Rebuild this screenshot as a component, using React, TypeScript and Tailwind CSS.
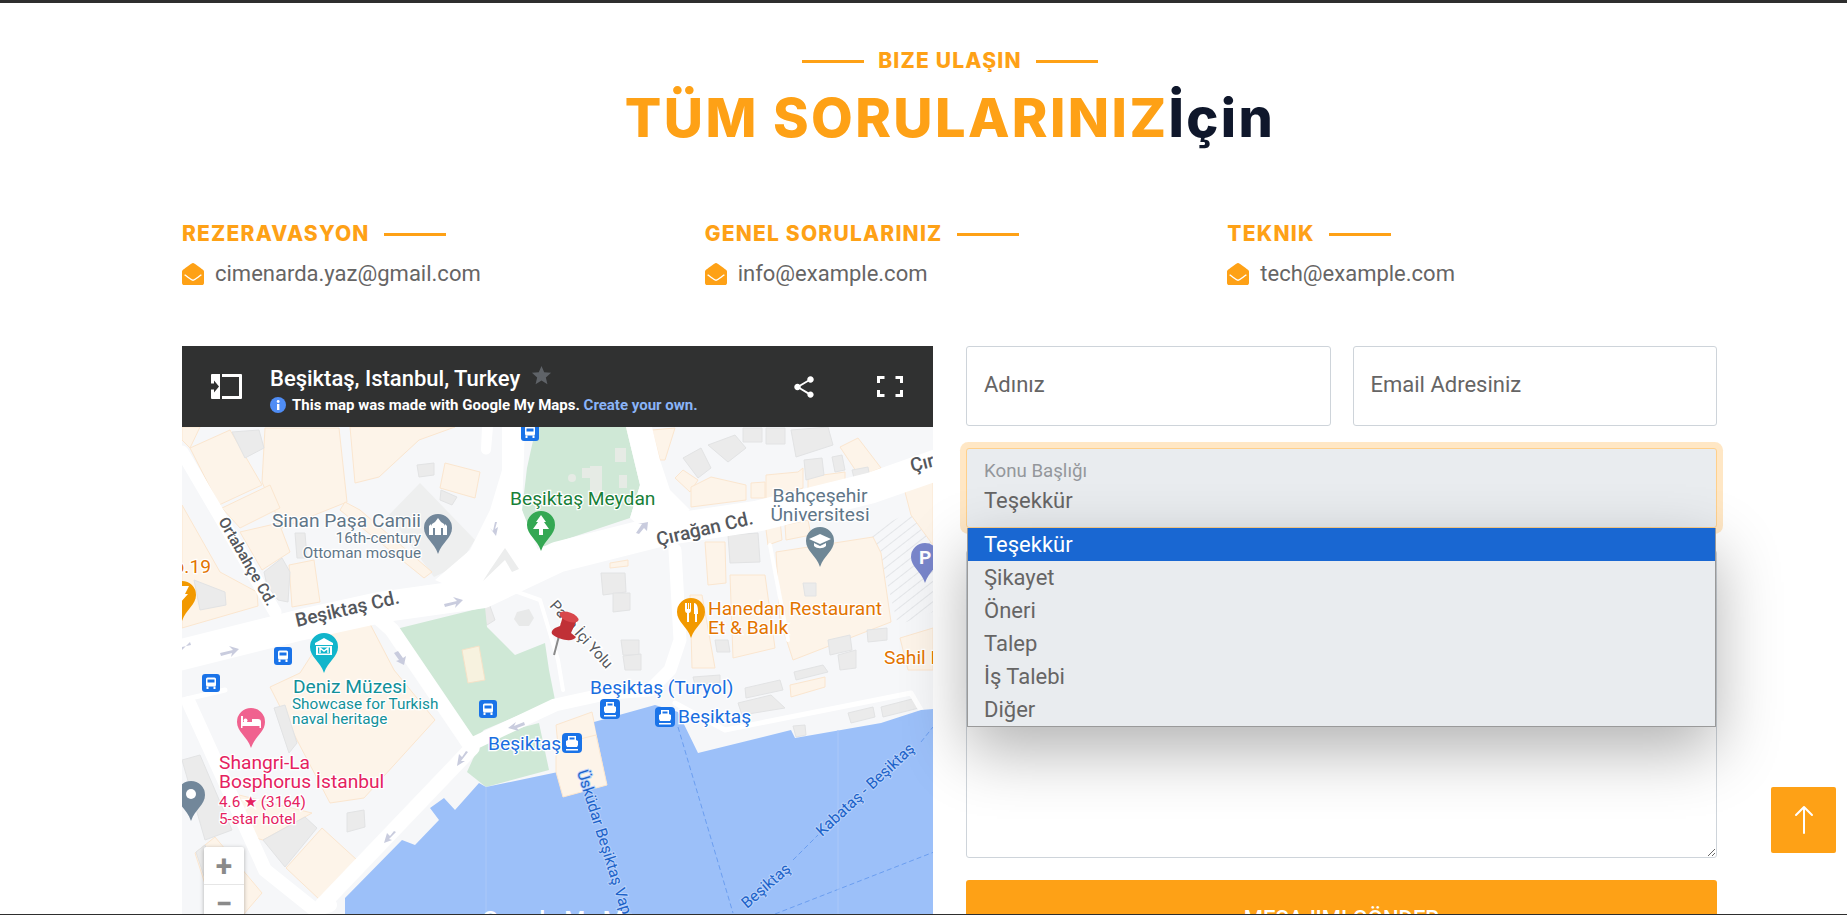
import { FaEnvelopeOpen } from 'react-icons/fa';
import { BsArrowUp } from 'react-icons/bs';
import { MdShare, MdStar } from 'react-icons/md';

const contacts = [
  { title: 'REZERAVASYON', email: 'cimenarda.yaz@gmail.com' },
  { title: 'GENEL SORULARINIZ', email: 'info@example.com' },
  { title: 'TEKNIK', email: 'tech@example.com' },
];

const options = ['Teşekkür', 'Şikayet', 'Öneri', 'Talep', 'İş Talebi', 'Diğer'];

// map shapes use page coordinates, the svg viewBox starts at the map's corner
const peach = [
  '265,428 339,428 347,502 282,528 262,482',
  '350,427 455,427 419,440 379,477 355,483',
  '445,463 480,472 475,498 440,488',
  '190,448 230,430 262,485 219,505',
  '222,508 270,485 280,508 240,528',
  '240,532 279,523 290,552 262,570',
  '289,565 314,560 320,602 292,607',
  '182,505 220,572 257,592 258,606 182,628',
  '345,502 360,510 432,572 424,578 340,510',
  '329,628 369,622 394,670 435,720 364,798 330,803 297,740 270,687 300,673',
  '322,828 357,860 320,900 286,868',
  '239,795 312,813 263,840 252,837',
  '195,853 215,837 262,893 243,915 215,915',
  '182,427 200,427 190,448 182,440',
  '675,478 683,470 698,480 690,492',
  '691,487 711,477 746,485 746,500 691,507',
  '751,483 765,482 765,498 751,498',
  '766,475 798,472 803,468 803,488 766,500',
  '808,477 845,472 845,488 808,492',
  '840,447 858,438 881,468 860,477',
  '776,552 873,537 881,553 891,622 793,660 780,620',
  '705,542 725,542 726,583 708,585',
  '730,575 765,575 775,648 733,658',
  '690,595 702,595 715,668 692,668',
  '765,522 780,520 782,540 768,545',
  '785,525 808,520 811,535 786,540',
  '610,428 640,428 642,430 612,433',
  '610,563 628,560 628,566 610,568',
  '905,492 933,478 933,545 911,515',
  '900,638 933,628 933,670 908,670',
  '790,685 825,677 825,687 791,697',
  '652,430 675,428 665,460 660,460',
  '556,725 592,712 607,785 563,797',
];

const grey = [
  '232,432 259,430 264,448 245,458',
  '417,465 434,463 434,475 419,477',
  '441,490 457,497 452,505 440,500',
  '295,533 305,533 307,558 297,558',
  '264,572 282,558 290,572 288,602 278,600 267,585',
  '194,580 225,592 226,605 200,610',
  '708,445 735,435 746,448 728,462',
  '683,458 701,448 711,468 698,478',
  '743,428 762,428 762,442 743,442',
  '766,428 785,428 785,444 766,444',
  '791,430 828,427 833,445 796,457',
  '804,460 822,458 824,475 806,480',
  '832,457 842,455 845,470 835,472',
  '852,470 868,467 870,478 855,482',
  '728,535 758,533 760,562 730,563',
  '601,573 625,573 626,592 603,595',
  '613,593 630,593 630,610 613,612',
  '621,640 639,640 639,655 623,655',
  '623,656 641,654 641,670 625,670',
  '715,640 728,640 730,652 717,652',
  '803,583 816,583 816,596 805,596',
  '828,640 850,635 852,650 830,655',
  '838,655 856,650 856,668 840,670',
  '867,630 887,628 887,640 868,642',
  '745,688 780,680 783,690 746,698',
  '738,703 771,695 785,708 742,715',
  '693,677 720,675 720,683 695,685',
  '848,713 873,707 875,717 851,723',
  '881,707 916,698 919,708 883,717',
  '793,726 805,725 806,735 796,737',
  '794,672 823,665 828,672 796,680',
  '274,708 285,705 297,743 289,753',
  '347,813 364,810 365,827 347,832',
  '305,817 317,828 285,867 263,840',
  '182,760 200,755 232,830 205,840',
  '196,852 205,845 222,895 212,900',
  '486,595 495,620 487,625 478,605',
];

const busIcons: [number, number][] = [[530, 432], [283, 656], [211, 683], [488, 709]];
const ferryIcons: [number, number][] = [[610, 709], [665, 717], [572, 743]];

function Pin({ x, y, color, children }: { x: number; y: number; color: string; children?: React.ReactNode }) {
  return (
    <g transform={`translate(${x} ${y})`}>
      <path
        d="M0 -14a14 14 0 0 1 14 14c0 10 -10 14 -14 26c-4 -12 -14 -16 -14 -26a14 14 0 0 1 14 -14z"
        fill={color}
      />
      {children}
    </g>
  );
}

function BusIcon({ x, y }: { x: number; y: number }) {
  return (
    <g transform={`translate(${x} ${y})`}>
      <rect x="-9" y="-9" width="18" height="18" rx="3" fill="#1a73e8" />
      <rect x="-5" y="-5.5" width="10" height="9" rx="1.5" fill="#fff" />
      <rect x="-3.5" y="-3.5" width="7" height="3" fill="#1a73e8" />
      <rect x="-4.5" y="3.5" width="2" height="2.5" fill="#fff" />
      <rect x="2.5" y="3.5" width="2" height="2.5" fill="#fff" />
    </g>
  );
}

function FerryIcon({ x, y }: { x: number; y: number }) {
  return (
    <g transform={`translate(${x} ${y})`}>
      <rect x="-10" y="-10" width="20" height="20" rx="4" fill="#1a73e8" />
      <path d="M-4 -7h8v4l2 1v4l-1 2h-10l-1 -2v-4l2 -1z" fill="#fff" />
      <rect x="-2.5" y="-5.5" width="5" height="2" fill="#1a73e8" />
      <rect x="-6" y="6" width="12" height="1.5" fill="#fff" />
    </g>
  );
}

function MapCanvas() {
  return (
    <svg viewBox="182 427 751 487" className="block h-[487px] w-[751px] bg-[#f6f7f9]">
      <defs>
        <pattern id="hatch" width="8" height="8" patternUnits="userSpaceOnUse" patternTransform="rotate(-38)">
          <rect width="8" height="8" fill="#f6f7f9" />
          <rect width="8" height="1" fill="#e3e5e8" />
        </pattern>
      </defs>

      {/* plaza and parking */}
      <polygon points="420,483 475,540 459,565 434,577 389,515" fill="#eeefef" />
      <polygon points="868,532 911,512 933,528 933,612 898,625 878,548" fill="url(#hatch)" />

      {/* blocks */}
      {peach.map((p) => (
        <polygon key={p} points={p} fill="#fdf4e9" stroke="#fbe6cf" strokeWidth="1" />
      ))}
      {grey.map((p) => (
        <polygon key={p} points={p} fill="#ebebeb" stroke="#e2e3e4" strokeWidth="1" />
      ))}

      {/* parks */}
      <polygon points="536,427 626,427 634,460 640,485 630,518 558,542 548,550 527,530 522,510 527,468" fill="#cfe8d6" />
      <polygon points="392,630 485,607 487,627 515,655 545,643 549,670 555,700 484,730 469,745" fill="#cfe8d6" />
      <polygon points="485,737 539,723 549,770 486,787 467,772 477,750" fill="#cfe8d6" />
      <polygon points="462,650 479,646 485,680 468,683" fill="#f7f2df" stroke="#f5e2c8" />
      <polygon points="517,612 529,609 534,618 529,626 519,626 514,619" fill="#e8e9e9" />
      <g fill="#e6ebe5">
        <rect x="615" y="448" width="11" height="14" />
        <rect x="582" y="468" width="9" height="10" />
        <rect x="590" y="466" width="12" height="30" />
        <rect x="619" y="475" width="8" height="13" />
        <circle cx="572" cy="478" r="4" />
      </g>

      {/* roads */}
      <g fill="none" stroke="#fff" strokeLinejoin="round" strokeLinecap="round">
        <polyline points="172,657 300,625 382,607 482,593 558,557 665,530 758,516 871,488 945,462" strokeWidth="31" />
        <polyline points="182,452 219,515 275,612" strokeWidth="13" />
        <polyline points="372,612 392,630 472,748 322,905" strokeWidth="15" />
        <polyline points="189,703 265,870 315,910 330,905" strokeWidth="14" />
        <polyline points="470,745 555,705 610,693 650,690 670,670 680,640 675,550" strokeWidth="13" />
        <polyline points="675,703 725,730 911,693 928,722" strokeWidth="5" stroke="#fff" />
        <polyline points="487,581 540,600 558,660 563,690" strokeWidth="4" />
        <polyline points="770,545 788,640" strokeWidth="4" />
        <polyline points="182,700 225,690" strokeWidth="5" />
      </g>
      <polygon points="502,427 525,427 522,510 540,555 558,570 480,600 435,580 470,550 490,510 502,470" fill="#fff" />
      <polygon points="626,427 652,427 660,460 670,490 690,510 650,535 630,518 640,485" fill="#fff" />
      <path d="M482 427l-1 22a5 5 0 0 0 10 1l2 -23z" fill="#fff" />
      <polygon points="483,581 505,560 512,572 519,569 505,548 490,570" fill="#eceded" />

      {/* water */}
      <polygon
        points="345,915 345,898 402,840 415,845 439,820 430,808 444,798 455,810 479,783 486,787 558,772 563,797 607,785 594,722 655,705 678,712 698,753 791,730 795,738 841,730 881,723 921,710 933,709 933,915"
        fill="#9cc0f9"
      />
      <polygon points="556,772 563,797 607,785 596,735 556,745" fill="#fdf4e9" stroke="#fbe6cf" />
      <g stroke="#6b9ef0" strokeWidth="1" strokeDasharray="5 3" fill="none">
        <line x1="678" y1="727" x2="733" y2="913" />
        <line x1="793" y1="860" x2="818" y2="835" />
        <line x1="921" y1="742" x2="933" y2="727" />
        <line x1="775" y1="914" x2="934" y2="852" />
      </g>
      <line x1="838" y1="730" x2="838" y2="914" stroke="#abc8f8" strokeWidth="1" />
      <line x1="486" y1="787" x2="486" y2="914" stroke="#abc8f8" strokeWidth="1" />

      {/* road arrows */}
      <g fill="#c9ccde">
        <path d="M444 604l13 -3l-4 -4l10 3l-8 8l1 -4l-11 3z" />
        <path d="M220 653l13 -3l-4 -4l10 3l-8 8l1 -4l-11 3z" />
        <path d="M182 647l9 -2l-1 -3l-8 8z" />
        <path d="M398 651l5 7l3 -2l-2 9l-8 -4l3 -1l-5 -7z" />
        <path d="M495 522l-2 9l-3 -3l6 8l2 -9l-3 2l2 -7z" />
        <path d="M636 533l6 -9l-4 0l10 -2l-1 9l-3 -3l-5 6z" />
        <path d="M524 722l-10 4l2 -4l-8 6l11 3l-2 -3l8 -3z" />
        <path d="M468 752l-7 9l4 0l-8 5l2 -12l3 3l4 -6z" />
        <path d="M396 832l-7 7l3 1l-8 3l3 -10l3 3l4 -5z" />
      </g>

      {/* road names */}
      <g
        fontFamily="Roboto, sans-serif"
        stroke="#fff"
        strokeWidth="3"
        className="[paint-order:stroke]"
        fill="#54575c"
        fontWeight="500"
      >
        <text x="297" y="627" fontSize="19" transform="rotate(-13 297 627)">Beşiktaş Cd.</text>
        <text x="658" y="546" fontSize="19" transform="rotate(-13 658 546)">Çırağan Cd.</text>
        <text x="912" y="472" fontSize="19" transform="rotate(-14 912 472)">Çırağan</text>
        <text x="218" y="521" fontSize="15.5" transform="rotate(60 218 521)">Ortabahçe Cd.</text>
        <text x="549" y="606" fontSize="15" fontWeight="400" transform="rotate(48 549 606)">Paşa İçi Yolu</text>
      </g>

      {/* place labels */}
      <g fontFamily="Roboto, sans-serif" stroke="#fff" strokeWidth="2.5" className="[paint-order:stroke]">
        <g fill="#5f7688" textAnchor="end">
          <text x="421" y="527" fontSize="19.2">Sinan Paşa Camii</text>
          <text x="421" y="543" fontSize="15.3">16th-century</text>
          <text x="421" y="558" fontSize="15.3">Ottoman mosque</text>
        </g>
        <g fill="#5f7688" textAnchor="middle">
          <text x="820" y="502" fontSize="19.2">Bahçeşehir</text>
          <text x="820" y="521" fontSize="19.2">Üniversitesi</text>
        </g>
        <text x="510" y="505" fontSize="19.2" fill="#188038">Beşiktaş Meydan</text>
        <g fill="#e37400">
          <text x="708" y="615" fontSize="19.2">Hanedan Restaurant</text>
          <text x="708" y="634" fontSize="19.2">Et &amp; Balık</text>
          <text x="884" y="664" fontSize="19.2">Sahil Restaurant</text>
          <text x="211" y="573" fontSize="19.2" textAnchor="end">b.19</text>
        </g>
        <g fill="#129099">
          <text x="293" y="693" fontSize="19.2">Deniz Müzesi</text>
          <text x="292" y="709" fontSize="15.3">Showcase for Turkish</text>
          <text x="292" y="724" fontSize="15.3">naval heritage</text>
        </g>
        <g fill="#e5225f">
          <text x="219" y="769" fontSize="19.2">Shangri-La</text>
          <text x="219" y="788" fontSize="19.2">Bosphorus İstanbul</text>
          <text x="219" y="807" fontSize="15.3">4.6 ★ (3164)</text>
          <text x="219" y="824" fontSize="15.3">5-star hotel</text>
        </g>
        <g fill="#1a6ee0">
          <text x="590" y="694" fontSize="19.2">Beşiktaş (Turyol)</text>
          <text x="678" y="723" fontSize="19.2">Beşiktaş</text>
          <text x="488" y="750" fontSize="19.2">Beşiktaş</text>
        </g>
      </g>

      {/* water labels */}
      <g
        fontFamily="Roboto, sans-serif"
        fontSize="15.5"
        fill="#1c62c9"
        stroke="#b8d2fb"
        strokeWidth="2"
        className="[paint-order:stroke]"
      >
        <text x="577" y="772" transform="rotate(72.5 577 772)">Üsküdar Beşiktaş Vapur</text>
        <text x="822" y="837" transform="rotate(-43 822 837)">Kabataş - Beşiktaş</text>
        <text x="747" y="909" transform="rotate(-41 747 909)">Beşiktaş</text>
      </g>
      <text x="482" y="928" fontFamily="Roboto, sans-serif" fontSize="24" fontWeight="500" fill="#fff">
        Google My Maps
      </text>

      {/* pins */}
      <Pin x={541} y={525} color="#34a853">
        <path d="M0 -10l5 7h-2l5 7h-6v6h-4v-6h-6l5 -7h-2z" fill="#fff" />
      </Pin>
      <Pin x={438} y={528} color="#72879a">
        <path d="M-9 7v-9l2 -2l1 2v-2l3 -2l3 -4l3 4l3 2v2l1 -2l2 2v9z" fill="#fff" />
        <rect x="-5" y="0" width="2" height="7" fill="#72879a" />
        <rect x="3" y="0" width="2" height="7" fill="#72879a" />
      </Pin>
      <Pin x={820} y={541} color="#6f8796">
        <path d="M0 -7l11 5l-11 5l-11 -5z" fill="#fff" />
        <path d="M-6 2v3c3 3 9 3 12 0v-3l-6 3z" fill="#fff" />
      </Pin>
      <Pin x={925} y={557} color="#7986cb">
        <text x="0" y="7" textAnchor="middle" fontFamily="Roboto, sans-serif" fontSize="19" fontWeight="700" fill="#fff">P</text>
      </Pin>
      <Pin x={691} y={612} color="#f29900">
        <path d="M-6 -9v7c0 2 1 3 2 3v9h2v-9c1 0 2 -1 2 -3v-7h-1v6h-1v-6h-1v6h-1v-6zM3 -9c3 0 4 4 4 8v3h-1v8h-2v-8h-1z" fill="#fff" />
      </Pin>
      <Pin x={182} y={595} color="#f29900">
        <path d="M-2 -9h9l-4 8h3l-8 9l2 -7h-3z" fill="#fff" />
      </Pin>
      <Pin x={324} y={647} color="#12b5cb">
        <path d="M0 -9l9 5v2h-18v-2zM-8 -1h16v9h-16z" fill="#fff" />
        <rect x="-6" y="0.5" width="12" height="6" fill="#12b5cb" />
        <path d="M-4 6v-5l4 3l4 -3v5" fill="none" stroke="#fff" strokeWidth="1.4" />
      </Pin>
      <Pin x={251} y={722} color="#f0628f">
        <path d="M-10 -6v12h1.500v-2h17v2h1.500v-6a3 3 0 0 0 -3 -3h-6v3h-9v-6z" fill="#fff" />
        <circle cx="-5.500" cy="-1.500" r="2" fill="#fff" />
      </Pin>
      <Pin x={191} y={795} color="#72879a">
        <circle cx="0" cy="-1" r="5" fill="#fff" />
      </Pin>
      {busIcons.map(([x, y]) => (
        <BusIcon key={`${x}-${y}`} x={x} y={y} />
      ))}
      {ferryIcons.map(([x, y]) => (
        <FerryIcon key={`${x}-${y}`} x={x} y={y} />
      ))}

      {/* pushpin */}
      <g transform="translate(-3 0)">
        <line x1="562" y1="636" x2="557" y2="655" stroke="#8a8a8a" strokeWidth="2" />
        <path d="M566 616l13 6l-5 11l5 4c-2 5 -16 4 -24 -3c-1 -2 0 -4 3 -6l5 -2z" fill="#c03036" />
        <ellipse cx="572" cy="617" rx="10" ry="4.500" transform="rotate(20 572 617)" fill="#d8474c" />
      </g>
    </svg>
  );
}

function MapEmbed() {
  return (
    <div className="relative h-[568px] overflow-hidden">
      <div className="flex h-[81px] items-center bg-[#303131]">
        <svg viewBox="0 0 31 25" className="ml-[29px] h-[25px] w-[31px] shrink-0" fill="#fff">
          <path d="M0 1a1 1 0 0 1 1 -1h8v25h-8a1 1 0 0 1 -1 -1z" />
          <path d="M11 0h19a1 1 0 0 1 1 1v23a1 1 0 0 1 -1 1h-19v-3h17v-19h-17z" />
          <path d="M0 9.500h3v-3l5 6l-5 6v-3h-3z" fill="#303131" />
        </svg>
        <div className="ml-[28px] mt-[6px] flex flex-col">
          <div className="flex items-start">
            <span className="text-[22px] font-medium leading-[28px] text-white">Beşiktaş, Istanbul, Turkey</span>
            <MdStar className="ml-[10px] -mt-[1px] text-[#5f6368]" size={23} />
          </div>
          <div className="mt-[2px] flex items-center">
            <svg viewBox="0 0 16 16" className="h-[16px] w-[16px]">
              <circle cx="8" cy="8" r="8" fill="#4f8df5" />
              <rect x="7" y="7" width="2.400" height="6" fill="#fff" />
              <circle cx="8.200" cy="4.500" r="1.400" fill="#fff" />
            </svg>
            <span className="ml-[6px] text-[15px] font-bold leading-[20px] text-white">
              This map was made with Google My Maps. <span className="text-[#8ab4f8]">Create your own.</span>
            </span>
          </div>
        </div>
        <MdShare className="ml-auto text-white" size={26} />
        <svg viewBox="0 0 26 21" className="ml-[60px] mr-[30px] h-[21px] w-[26px]" fill="none" stroke="#fff" strokeWidth="3">
          <path d="M1.500 7v-5.500h6M18.500 1.500h6v5.500M24.500 14v5.500h-6M7.500 19.500h-6v-5.500" />
        </svg>
      </div>
      <MapCanvas />
      <div className="absolute left-[22px] top-[501px] w-[40px] rounded-[2px] bg-white shadow-[0_1px_4px_rgba(0,0,0,0.3)]">
        <div className="flex h-[38px] items-center justify-center border-b border-[#e6e6e6] text-[30px] font-bold leading-none text-[#8a8a8a]">+</div>
        <div className="flex h-[38px] items-center justify-center text-[30px] font-bold leading-none text-[#8a8a8a]">−</div>
      </div>
    </div>
  );
}

function SubjectSelect() {
  return (
    <div className="relative h-[80px]">
      <div className="h-full rounded-[3px] border border-[#ffd08b] bg-[#e9ecef] px-[17px] pt-[11px] shadow-[0_0_0_6px_rgba(254,161,22,0.25)]">
        <div className="text-[18.7px] leading-[22px] text-[#94979b]">Konu Başlığı</div>
        <div className="mt-[5px] text-[22px] leading-[28px] text-[#666565]">Teşekkür</div>
      </div>
      <div className="absolute left-[1px] right-[1px] top-full border border-t-0 border-[#9a9a9a] bg-[#e9ecef] shadow-[0_24px_60px_rgba(0,0,0,0.3)]">
        {options.map((o, i) => (
          <div
            key={o}
            className={
              i === 0
                ? 'flex h-[33px] items-center bg-[#1967d2] px-[16px] text-[22px] text-white'
                : 'flex h-[33px] items-center px-[16px] text-[22px] text-[#666565]'
            }
          >
            {o}
          </div>
        ))}
      </div>
    </div>
  );
}

function ContactForm() {
  return (
    <div className="flex flex-col gap-[22px]">
      <div className="grid grid-cols-2 gap-[22px]">
        <input
          placeholder="Adınız"
          className="h-[80px] rounded-[3px] border border-[#ced4da] bg-white px-[17px] pb-[3px] text-[22px] outline-none placeholder:text-[#666565]"
        />
        <input
          placeholder="Email Adresiniz"
          className="h-[80px] rounded-[3px] border border-[#ced4da] bg-white px-[17px] pb-[3px] text-[22px] outline-none placeholder:text-[#666565]"
        />
      </div>
      <SubjectSelect />
      <textarea className="block h-[308px] w-full rounded-[3px] border border-[#ced4da] bg-white outline-none" />
      <button className="h-[76px] shrink-0 rounded-[3px] bg-[#fea116] text-[22px] font-medium text-white">
        MESAJIMI GÖNDER
      </button>
    </div>
  );
}

export default function App() {
  return (
    <div className="relative flex h-[915px] flex-col overflow-hidden bg-white font-[Roboto,sans-serif]">
      <div className="h-[3px] shrink-0 bg-[#2e2e2e]" />
      <div className="min-h-0 flex-1 overflow-hidden">
        <div className="ml-[182px] w-[1536px] pt-[46px]">
          <div className="flex items-center justify-center gap-[14px]">
            <span className="h-[3px] w-[62px] bg-[#fea116]" />
            <span className="font-[Inter,sans-serif] text-[21px] font-extrabold leading-[24px] tracking-[1.2px] text-[#fea116]">BIZE ULAŞIN</span>
            <span className="h-[3px] w-[62px] bg-[#fea116]" />
          </div>
          <h1 className="mt-[9px] text-center font-[Inter,sans-serif] text-[54px] font-extrabold leading-[72px] tracking-[2.4px] text-[#fea116]">
            TÜM SORULARINIZ<span className="text-[#0f172b]">İçin</span>
          </h1>
          <div className="mt-[66px] grid grid-cols-3 gap-[32px]">
            {contacts.map((c) => (
              <div key={c.title}>
                <div className="flex items-center gap-[14px]">
                  <span className="font-[Inter,sans-serif] text-[21px] font-extrabold leading-[28px] tracking-[1.2px] text-[#fea116]">{c.title}</span>
                  <span className="h-[3px] w-[62px] bg-[#fea116]" />
                </div>
                <div className="mt-[10px] flex items-center gap-[11px]">
                  <FaEnvelopeOpen className="text-[#fea116]" size={22} />
                  <span className="text-[22px] leading-[32px] text-[#666565]">{c.email}</span>
                </div>
              </div>
            ))}
          </div>
          <div className="mt-[56px] grid grid-cols-[751px_751px] gap-[33px]">
            <MapEmbed />
            <ContactForm />
          </div>
        </div>
      </div>
      <div className="h-[1px] shrink-0 bg-[#2e2e2e]" />
      <div className="absolute left-[1771px] top-[787px] flex h-[66px] w-[65px] items-center justify-center rounded-[2px] bg-[#fea116]">
        <BsArrowUp className="text-white" size={32} />
      </div>
    </div>
  );
}
